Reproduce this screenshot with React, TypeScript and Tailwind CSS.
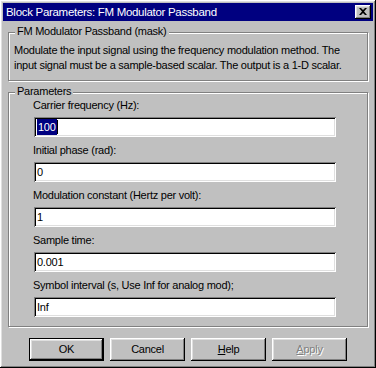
import React from 'react';

const raised =
  'shadow-[inset_-1px_-1px_#000,inset_1px_1px_#fff,inset_-2px_-2px_#808080,inset_2px_2px_#dfdfdf]';
const sunken =
  'shadow-[inset_1px_1px_#808080,inset_-1px_-1px_#fff,inset_2px_2px_#000,inset_-2px_-2px_#dfdfdf]';

const fields = [
  { label: 'Carrier frequency (Hz):', value: '100', selected: true },
  { label: 'Initial phase (rad):', value: '0' },
  { label: 'Modulation constant (Hertz per volt):', value: '1' },
  { label: 'Sample time:', value: '0.001' },
  { label: 'Symbol interval (s, Use Inf for analog mod);', value: 'Inf' },
];

const GroupBox: React.FC<{ title: string; className?: string; children: React.ReactNode }> = ({
  title,
  className = '',
  children,
}) => (
  <div
    className={`relative border border-[#808080] shadow-[inset_1px_1px_#fff,1px_1px_#fff] ${className}`}
  >
    <span className="absolute left-[6px] top-[-8px] bg-[#c0c0c0] px-[2px] leading-[13px]">
      {title}
    </span>
    {children}
  </div>
);

const Button: React.FC<{ children: React.ReactNode; isDefault?: boolean; disabled?: boolean }> = ({
  children,
  isDefault,
  disabled,
}) => (
  <div className={`w-[75px] h-[23px] ${isDefault ? 'border border-black' : ''}`}>
    <div
      className={`w-full h-full flex items-center justify-center bg-[#c0c0c0] ${raised} ${
        disabled ? 'text-[#808080] [text-shadow:1px_1px_#fff]' : 'text-black'
      }`}
    >
      {children}
    </div>
  </div>
);

export default function App() {
  return (
    <div
      className={`w-[376px] h-[368px] bg-[#c0c0c0] p-[3px] flex flex-col text-[11px] tracking-[-0.25px] text-black ${raised}`}
      style={{ fontFamily: '"Liberation Sans", Arial, sans-serif' }}
    >
      {/* title bar */}
      <div className="h-[18px] bg-[#000080] flex items-center justify-between pl-[3px] pr-[2px] shrink-0">
        <span className="text-white text-[11.5px] leading-[18px] tracking-[-0.3px]">
          Block Parameters: FM Modulator Passband
        </span>
        <div className={`w-[16px] h-[14px] bg-[#c0c0c0] flex items-center justify-center ${raised}`}>
          <svg width="8" height="7" viewBox="0 0 8 7" className="mt-[-1px] ml-[-1px]">
            <path d="M0 0h2l2 2 2-2h2L5 3.5 8 7H6L4 5 2 7H0l3-3.5z" fill="#000" />
          </svg>
        </div>
      </div>

      <div className="flex flex-col px-[5px]">
        <GroupBox title="FM Modulator Passband (mask)" className="mt-[11px] pt-[10px] pb-[7px] pl-[5px]">
          <p className="leading-[15px]">
            Modulate the input signal using the frequency modulation method. The
            <br />
            input signal must be a sample-based scalar. The output is a 1-D scalar.
          </p>
        </GroupBox>

        <GroupBox title="Parameters" className="mt-[11px] pt-[6px] pb-[9px] pl-[24px]">
          <div className="flex flex-col gap-[7px]">
            {fields.map((f) => (
              <div key={f.label} className="flex flex-col gap-[5px]">
                <span className="leading-[13px]">{f.label}</span>
                <div className={`ml-[1px] w-[302px] h-[20px] bg-white flex items-center pl-[3px] ${sunken}`}>
                  {f.selected ? (
                    <>
                      <span className="bg-[#000080] text-white leading-[16px] px-[1px]">{f.value}</span>
                      <span className="w-px h-[14px] bg-black" />
                    </>
                  ) : (
                    <span className="leading-[16px]">{f.value}</span>
                  )}
                </div>
              </div>
            ))}
          </div>
        </GroupBox>
      </div>

      <div className="flex justify-center gap-[6px] mt-[11px]">
        <Button isDefault>OK</Button>
        <Button>Cancel</Button>
        <Button>
          <span>
            <u>H</u>elp
          </span>
        </Button>
        <Button disabled>
          <span>
            <u>A</u>pply
          </span>
        </Button>
      </div>
    </div>
  );
}
